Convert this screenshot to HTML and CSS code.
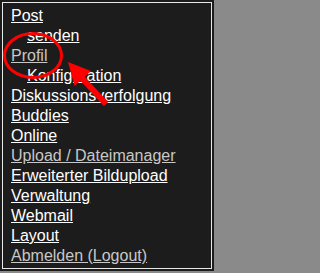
FILE: index.html
```html
<!DOCTYPE html>
<html>
<head>
<meta charset="utf-8">
<link rel="stylesheet" href="styles.css">
</head>
<body>
<div class="panel">
  <nav class="frame">
    <a class="link" href="#">Post</a>
    <a class="link sub" href="#">senden</a>
    <a class="link visited" href="#">Profil</a>
    <a class="link sub" href="#">Konfiguration</a>
    <a class="link" href="#">Diskussionsverfolgung</a>
    <a class="link" href="#">Buddies</a>
    <a class="link" href="#">Online</a>
    <a class="link visited" href="#">Upload / Dateimanager</a>
    <a class="link" href="#">Erweiterter Bildupload</a>
    <a class="link" href="#">Verwaltung</a>
    <a class="link" href="#">Webmail</a>
    <a class="link" href="#">Layout</a>
    <a class="link visited" href="#">Abmelden (Logout)</a>
  </nav>
  <svg class="markup" width="214" height="271" viewBox="0 0 214 271">
    <ellipse cx="33" cy="55.5" rx="28.5" ry="22" fill="none" stroke="#ff0000" stroke-width="3"/>
    <line x1="80" y1="76" x2="106" y2="104" stroke="#ff0000" stroke-width="6"/>
    <polygon points="68,62 91,71 74.6,86" fill="#ff0000"/>
  </svg>
</div>
</body>
</html>
```

FILE: styles.css
```css
html, body {
  margin: 0;
  padding: 0;
  background: #8a8a8a;
}
.panel {
  position: relative;
  width: 214px;
  height: 271px;
  box-sizing: border-box;
  padding: 2px;
  background: #1c1c1c;
}
.frame {
  display: flex;
  flex-direction: column;
  align-items: flex-start;
  height: 100%;
  box-sizing: border-box;
  border: 1px solid #e8e8e8;
  padding: 3px 0 0 8px;
  font-family: "Liberation Sans", Arial, sans-serif;
  font-size: 16px;
  line-height: 20px;
}
.link {
  color: #ffffff;
  text-decoration: underline;
}
.link.visited {
  color: #c8c8c8;
}
.link.sub {
  margin-left: 16px;
}
.markup {
  position: absolute;
  left: 0;
  top: 0;
  pointer-events: none;
}
```
